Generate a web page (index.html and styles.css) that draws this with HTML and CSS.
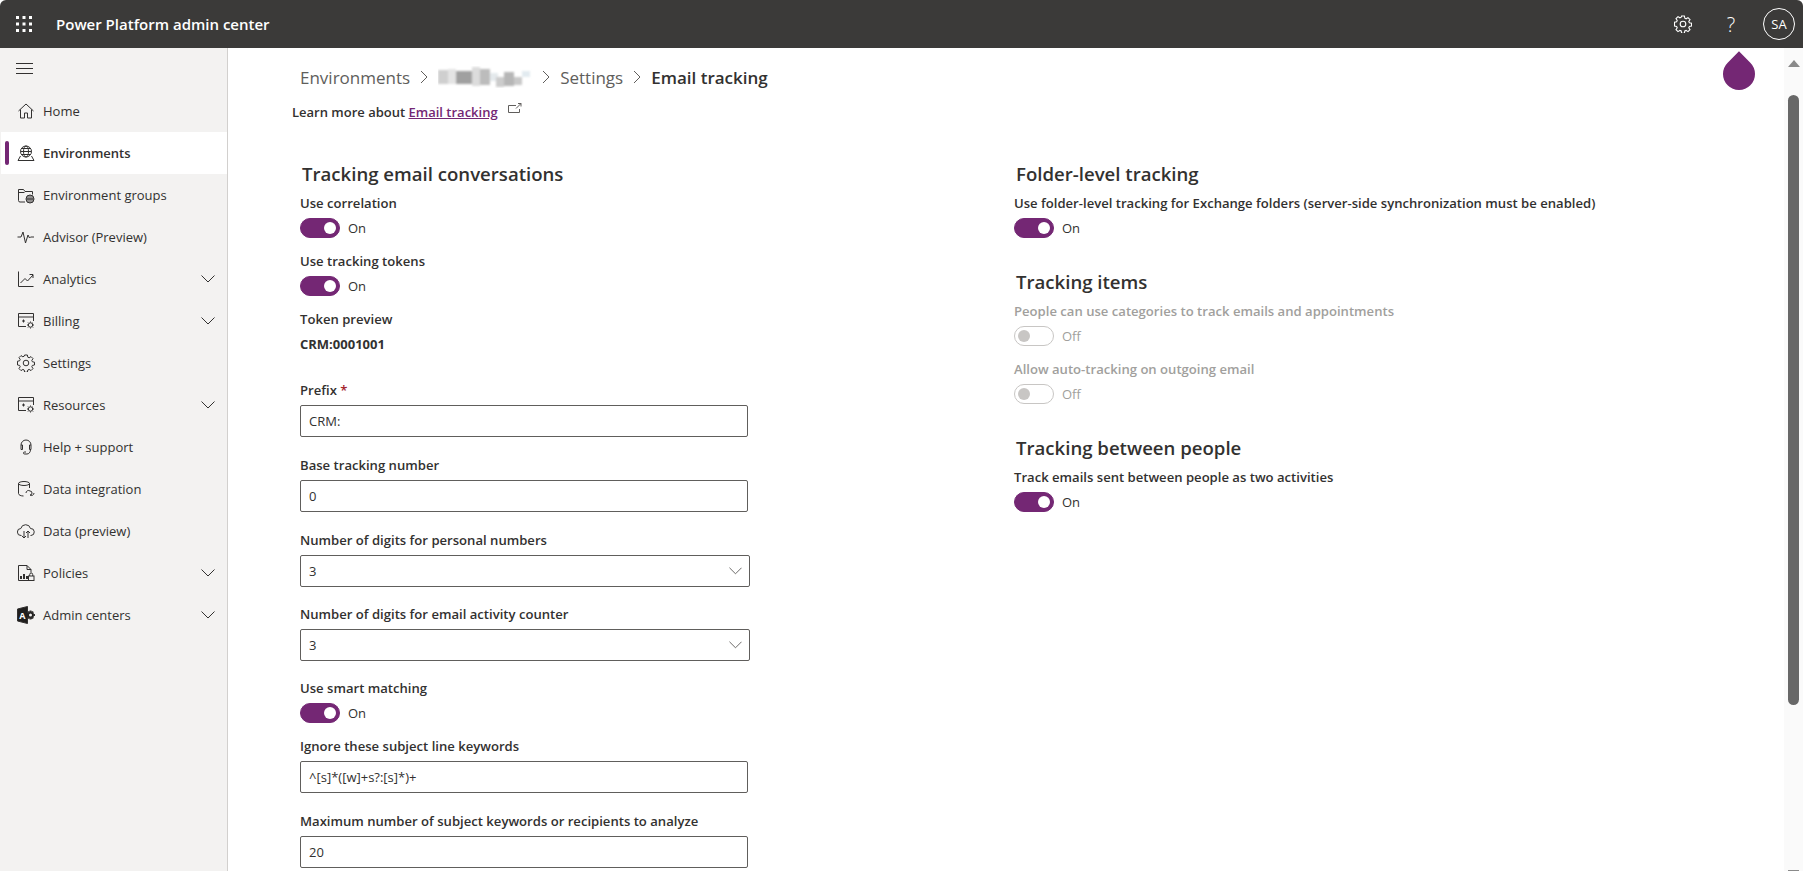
FILE: index.html
```html
<!DOCTYPE html>
<html lang="en">
<head>
    <meta charset="UTF-8">
    <title>Email tracking</title>
    <link rel="stylesheet" href="styles.css">
</head>
<body>
<header class="topbar">
    <svg class="waffle" width="16" height="16" viewBox="0 0 16 16" fill="#fff">
        <rect x="0" y="0" width="3" height="3"/><rect x="6.5" y="0" width="3" height="3"/><rect x="13" y="0" width="3" height="3"/>
        <rect x="0" y="6.5" width="3" height="3"/><rect x="6.5" y="6.5" width="3" height="3"/><rect x="13" y="6.5" width="3" height="3"/>
        <rect x="0" y="13" width="3" height="3"/><rect x="6.5" y="13" width="3" height="3"/><rect x="13" y="13" width="3" height="3"/>
    </svg>
    <div class="app-name">Power Platform admin center</div>
    <div class="top-actions">
        <svg width="18" height="18" viewBox="0 0 18 18" fill="none" stroke="#fff" stroke-width="1.1">
            <path d="M7.600 1h2.800l.4 2.200 1.300.6 1.900-1.200 2 2-1.200 1.900.6 1.300 2.100.4v2.800l-2.100.4-.6 1.300 1.200 1.900-2 2-1.900-1.200-1.300.6-.4 2.200H7.600l-.4-2.200-1.300-.6-1.900 1.200-2-2 1.200-1.900-.6-1.300-2.100-.4V7.200l2.100-.4.6-1.300-1.200-1.900 2-2 1.900 1.200 1.300-.6z"/>
            <circle cx="9" cy="9" r="2.800"/>
        </svg>
        <div class="help">?</div>
        <div class="avatar">SA</div>
    </div>
</header>

<div class="shell">
    <nav class="sidebar">
        <div class="burger"><span></span><span></span><span></span></div>
        <a class="nav-item">
            <svg class="nav-icon" viewBox="0 0 18 18"><path d="M1.500 9 9 2l7.500 7M3.500 7.500V16h4v-5h3v5h4V7.500"/></svg>
            <span>Home</span>
        </a>
        <a class="nav-item active">
            <svg class="nav-icon" viewBox="0 0 18 18"><circle cx="9" cy="7.500" r="5.500"/><ellipse cx="9" cy="7.500" rx="2.500" ry="5.500"/><path d="M3.500 7.500h11M4.500 4.500h9M4.500 10.500h9M3.500 12 1 16.500h16L14.500 12"/></svg>
            <span>Environments</span>
        </a>
        <a class="nav-item">
            <svg class="nav-icon" viewBox="0 0 18 18"><path d="M8 16H3a1.500 1.500 0 0 1-1.500-1.500v-11h5l1.500 2h7.500v3"/><path d="M1.500 6.500h6"/><circle cx="13" cy="13" r="4"/><path d="M9 13h8M13 9v8M11 9.500v7M15 9.500v7"/></svg>
            <span>Environment groups</span>
        </a>
        <a class="nav-item">
            <svg class="nav-icon" viewBox="0 0 18 18"><path d="M.5 9H4l2-5 2.500 11 2.500-8 1.500 3 1-1h3.500"/></svg>
            <span>Advisor (Preview)</span>
        </a>
        <a class="nav-item">
            <svg class="nav-icon" viewBox="0 0 18 18"><path d="M1.500 1.500v15h15M3.500 13 8 8.500l2.500 2.500 5.500-6M12.500 4.500H16V8"/></svg>
            <span>Analytics</span>
            <svg class="nav-chevron" viewBox="0 0 14 8"><path d="M.5.5 7 7 13.500.5"/></svg>
        </a>
        <a class="nav-item">
            <svg class="nav-icon" viewBox="0 0 18 18"><path d="M9 14.500H1.500v-13h15V9M1.500 5h15M5 9h3M6.500 7.500v3"/><circle cx="13.500" cy="13" r="2.200"/><path d="M13.500 9.500v1M13.500 15.500v1M10 13h1M16 13h1M11 10.500l.7.7M15.300 14.800l.7.7M16 10.500l-.7.7M11.700 14.800l-.7.7"/></svg>
            <span>Billing</span>
            <svg class="nav-chevron" viewBox="0 0 14 8"><path d="M.5.5 7 7 13.500.5"/></svg>
        </a>
        <a class="nav-item">
            <svg class="nav-icon" viewBox="0 0 18 18"><circle cx="9" cy="9" r="2.800"/><path d="M7.600 1h2.800l.4 2.200 1.300.6 1.900-1.200 2 2-1.200 1.900.6 1.300 2.100.4v2.800l-2.100.4-.6 1.300 1.200 1.900-2 2-1.900-1.200-1.300.6-.4 2.200H7.600l-.4-2.200-1.300-.6-1.900 1.200-2-2 1.200-1.900-.6-1.300-2.100-.4V7.200l2.100-.4.6-1.300-1.200-1.900 2-2 1.900 1.200 1.300-.6z"/></svg>
            <span>Settings</span>
        </a>
        <a class="nav-item">
            <svg class="nav-icon" viewBox="0 0 18 18"><path d="M9 14.500H1.500v-13h15V9M1.500 5h15M5 9h3M6.500 7.500v3"/><circle cx="13.500" cy="13" r="2.200"/><path d="M13.500 9.500v1M13.500 15.500v1M10 13h1M16 13h1M11 10.500l.7.7M15.300 14.800l.7.7M16 10.500l-.7.7M11.700 14.800l-.7.7"/></svg>
            <span>Resources</span>
            <svg class="nav-chevron" viewBox="0 0 14 8"><path d="M.5.5 7 7 13.500.5"/></svg>
        </a>
        <a class="nav-item">
            <svg class="nav-icon" viewBox="0 0 18 18"><path d="M4 7a5 5 0 0 1 10 0M4 7v4.500h1.500V7zM14 7v4.500h-1.500V7zM13.500 11.500c0 3-1.800 4.500-3.500 4.500H7.500a1 1 0 0 1 0-2H9"/></svg>
            <span>Help + support</span>
        </a>
        <a class="nav-item">
            <svg class="nav-icon" viewBox="0 0 18 18"><ellipse cx="7" cy="3.500" rx="5.500" ry="2"/><path d="M1.500 3.500v10c0 1.500 2.500 2.500 5 2.500M12.500 3.500V8"/><path d="M9 13a2.500 2.500 0 0 1 4-2M17 13a2.500 2.500 0 0 1-4 2M13 11a2 2 0 0 1 0 4"/></svg>
            <span>Data integration</span>
        </a>
        <a class="nav-item">
            <svg class="nav-icon" viewBox="0 0 18 18"><path d="M4.500 13.500H4A3.500 3.500 0 0 1 3.800 6.500a5 5 0 0 1 9.700 0A3.500 3.500 0 0 1 14 13.500h-.5"/><path d="M7 9v7M5 14l2 2 2-2M11 16V9M9 11l2-2 2 2"/></svg>
            <span>Data (preview)</span>
        </a>
        <a class="nav-item">
            <svg class="nav-icon" viewBox="0 0 18 18"><path d="M11 16.500H1.500v-15H10l4 4v3M10 1.500v4h4"/><path class="heavy" d="M4 15v-3M7 15v-5M10 15v-3"/><rect x="11.500" y="12" width="5.500" height="4.500"/><path d="M12.700 12v-1.500a1.500 1.500 0 0 1 3 0V12"/></svg>
            <span>Policies</span>
            <svg class="nav-chevron" viewBox="0 0 14 8"><path d="M.5.5 7 7 13.500.5"/></svg>
        </a>
        <a class="nav-item">
            <svg class="nav-icon" viewBox="0 0 18 18"><path class="solid" d="M.5 3 10.500.5v17L.5 15z"/><text class="icon-letter" x="5.400" y="12.500">A</text><circle class="gear" cx="13.500" cy="9" r="2.500"/><path class="heavy" d="M13.500 4.500v2M13.500 11.500v2M16 9h2M11 5.500l1 1.500M16 5.500l-1 1.500M11 12.500l1-1.500M16 12.500l-1-1.500"/></svg>
            <span>Admin centers</span>
            <svg class="nav-chevron" viewBox="0 0 14 8"><path d="M.5.5 7 7 13.500.5"/></svg>
        </a>
    </nav>

    <main class="content">
        <div class="breadcrumb">
            <span>Environments</span>
            <svg class="crumb-sep" viewBox="0 0 8 14"><path d="M1 1l6 6-6 6"/></svg>
            <svg class="mosaic" width="94" height="22" viewBox="0 0 94 22">
                <g filter="url(#soft)">
                    <rect x="0" y="4" width="10" height="14" fill="#cfcfcf"/>
                    <rect x="10" y="3" width="8" height="15" fill="#e4e4e4"/>
                    <rect x="18" y="5" width="16" height="13" fill="#a0a0a0"/>
                    <rect x="34" y="1" width="8" height="19" fill="#dcdcdc"/>
                    <rect x="42" y="3" width="10" height="16" fill="#bcbcbc"/>
                    <rect x="52" y="7" width="8" height="8" fill="#e4e9ec"/>
                    <rect x="58" y="11" width="8" height="10" fill="#cccccc"/>
                    <rect x="66" y="6" width="10" height="14" fill="#b6b6b6"/>
                    <rect x="76" y="11" width="8" height="8" fill="#c8c8c8"/>
                    <rect x="84" y="5" width="8" height="6" fill="#e2ebf0"/>
                </g>
                <filter id="soft"><feGaussianBlur stdDeviation="1"/></filter>
            </svg>
            <svg class="crumb-sep" viewBox="0 0 8 14"><path d="M1 1l6 6-6 6"/></svg>
            <span>Settings</span>
            <svg class="crumb-sep" viewBox="0 0 8 14"><path d="M1 1l6 6-6 6"/></svg>
            <span class="crumb-current">Email tracking</span>
        </div>

        <div class="learn-more">
            Learn more about <a class="link">Email tracking</a>
            <svg class="ext-icon" width="14" height="10" viewBox="0 0 14 10"><path d="M8 2.500H.5v7h11V6M8 5.500 13 .5M10 .5h3v3"/></svg>
        </div>

        <div class="columns">
            <section>
                <h2>Tracking email conversations</h2>
                <div class="label">Use correlation</div>
                <div class="toggle-row"><span class="toggle on"></span>On</div>
                <div class="label gap-13">Use tracking tokens</div>
                <div class="toggle-row"><span class="toggle on"></span>On</div>
                <div class="label gap-13">Token preview</div>
                <div class="token">CRM:0001001</div>

                <div class="label gap-26">Prefix <span class="req">*</span></div>
                <div class="input">CRM:</div>
                <div class="label gap-18">Base tracking number</div>
                <div class="input">0</div>
                <div class="label gap-18">Number of digits for personal numbers</div>
                <div class="input select">3<svg viewBox="0 0 14 8"><path d="M.5.5 7 7 13.500.5"/></svg></div>
                <div class="label gap-17">Number of digits for email activity counter</div>
                <div class="input select">3<svg viewBox="0 0 14 8"><path d="M.5.5 7 7 13.500.5"/></svg></div>
                <div class="label gap-17">Use smart matching</div>
                <div class="toggle-row"><span class="toggle on"></span>On</div>
                <div class="label gap-13">Ignore these subject line keywords</div>
                <div class="input">^[s]*([w]+s?:[s]*)+</div>
                <div class="label gap-18">Maximum number of subject keywords or recipients to analyze</div>
                <div class="input">20</div>
            </section>

            <section class="right-col">
                <h2>Folder-level tracking</h2>
                <div class="label">Use folder-level tracking for Exchange folders (server-side synchronization must be enabled)</div>
                <div class="toggle-row"><span class="toggle on"></span>On</div>

                <h2 class="gap-30">Tracking items</h2>
                <div class="label disabled">People can use categories to track emails and appointments</div>
                <div class="toggle-row disabled"><span class="toggle"></span>Off</div>
                <div class="label disabled gap-13">Allow auto-tracking on outgoing email</div>
                <div class="toggle-row disabled"><span class="toggle"></span>Off</div>

                <h2 class="gap-30">Tracking between people</h2>
                <div class="label">Track emails sent between people as two activities</div>
                <div class="toggle-row"><span class="toggle on"></span>On</div>
            </section>
        </div>

        <div class="drop"></div>
    </main>

    <div class="scrollbar">
        <div class="scroll-up"></div>
        <div class="scroll-thumb"></div>
        <div class="scroll-down"></div>
    </div>
</div>
</body>
</html>
```
FILE: styles.css
```css
* {
    box-sizing: border-box;
}

html, body {
    height: 100%;
}

body {
    margin: 0;
    display: flex;
    flex-direction: column;
    overflow: hidden;
    background: #fff;
    color: #323130;
    font-family: "Open Sans", "Liberation Sans", sans-serif;
    font-size: 13px;
}

/* top bar */
.topbar {
    flex: none;
    height: 48px;
    display: flex;
    align-items: center;
    padding-left: 16px;
    background: #3b3a39;
    color: #fff;
    border-radius: 6px 6px 0 0;
}

.app-name {
    margin-left: 24px;
    font-size: 15px;
    font-weight: 600;
}

.top-actions {
    margin-left: auto;
    display: flex;
    align-items: center;
    padding-right: 8px;
}

.help {
    width: 18px;
    margin-left: 30px;
    font-size: 20px;
    font-weight: 300;
    text-align: center;
}

.avatar {
    width: 32px;
    height: 32px;
    margin-left: 23px;
    border: 1px solid #fff;
    border-radius: 50%;
    font-size: 13px;
    line-height: 30px;
    text-align: center;
}

/* page below the bar */
.shell {
    flex: 1;
    min-height: 0;
    display: flex;
}

.sidebar {
    flex: none;
    width: 228px;
    padding-left: 1px;
    background: #f3f2f1;
    border-right: 1px solid #d2d0ce;
}

.burger {
    height: 42px;
    padding: 15px 0 0 15px;
}

.burger span {
    display: block;
    width: 17px;
    height: 1px;
    margin-bottom: 4px;
    background: #323130;
}

.nav-item {
    position: relative;
    height: 42px;
    display: flex;
    align-items: center;
    padding-left: 16px;
    color: #323130;
}

.nav-item.active {
    background: #fff;
    font-weight: 600;
}

.nav-item.active::before {
    content: "";
    position: absolute;
    left: 4px;
    top: 9px;
    width: 4px;
    height: 24px;
    border-radius: 2px;
    background: #742774;
}

.nav-icon {
    flex: none;
    width: 18px;
    height: 18px;
    margin-right: 8px;
    fill: none;
    stroke: #323130;
    stroke-width: 1;
}

.nav-icon .heavy {
    stroke-width: 2;
}

.nav-icon .solid {
    fill: #201f1e;
}

.nav-icon .gear {
    stroke: #201f1e;
    stroke-width: 2;
}

.icon-letter {
    fill: #fff;
    stroke: none;
    font-size: 9px;
    font-weight: 700;
    text-anchor: middle;
}

.nav-chevron {
    width: 14px;
    height: 8px;
    margin-left: auto;
    margin-right: 12px;
    fill: none;
    stroke: #323130;
}

/* main area */
.content {
    position: relative;
    flex: 1;
    min-width: 0;
    overflow: hidden;
    padding: 17px 0 0 72px;
}

.breadcrumb {
    height: 24px;
    display: flex;
    align-items: center;
    font-size: 17px;
    color: #605e5c;
}

.crumb-sep {
    width: 8px;
    height: 14px;
    margin: 0 10px;
    fill: none;
    stroke: #605e5c;
}

.crumb-current {
    color: #323130;
    font-weight: 600;
}

.learn-more {
    height: 20px;
    margin: 13px 0 0 -8px;
    font-weight: 600;
    line-height: 20px;
}

.link {
    color: #742774;
    text-decoration: underline;
}

.ext-icon {
    margin: 0 0 4px 7px;
    fill: none;
    stroke: #605e5c;
}

.columns {
    margin-top: 38px;
    display: grid;
    grid-template-columns: 714px 1fr;
}

h2 {
    height: 28px;
    margin: 0 0 5px 2px;
    font-size: 18.600px;
    font-weight: 600;
    line-height: 28px;
}

.label {
    height: 20px;
    margin-bottom: 5px;
    font-size: 13.100px;
    font-weight: 600;
    line-height: 20px;
}

.label.disabled {
    color: #a19f9d;
}

.req {
    color: #a4262c;
}

.gap-13 { margin-top: 13px; }
.gap-17 { margin-top: 17px; }
.gap-18 { margin-top: 18px; }
.gap-26 { margin-top: 26px; }
.gap-30 { margin-top: 30px; }

.toggle-row {
    height: 20px;
    display: flex;
    align-items: center;
    color: #323130;
}

.toggle-row.disabled {
    color: #a19f9d;
}

.toggle {
    position: relative;
    width: 40px;
    height: 20px;
    margin-right: 8px;
    border: 1px solid #c8c6c4;
    border-radius: 10px;
    background: #fff;
}

.toggle::after {
    content: "";
    position: absolute;
    left: 3px;
    top: 3px;
    width: 12px;
    height: 12px;
    border-radius: 50%;
    background: #c8c6c4;
}

.toggle.on {
    border-color: #742774;
    background: #742774;
}

.toggle.on::after {
    left: 23px;
    background: #fff;
}

.token {
    height: 20px;
    font-weight: 700;
    line-height: 20px;
}

.input {
    width: 448px;
    height: 32px;
    padding-left: 8px;
    border: 1px solid #605e5c;
    border-radius: 2px;
    background: #fff;
    color: #323130;
    line-height: 30px;
}

.input.select {
    width: 450px;
    display: flex;
    align-items: center;
    justify-content: space-between;
    padding-right: 7px;
}

.input.select svg {
    width: 13px;
    height: 8px;
    fill: none;
    stroke: #605e5c;
}

/* over the page content */
.drop {
    position: absolute;
    right: 29px;
    top: 10px;
    width: 32px;
    height: 32px;
    background: #742774;
    border-radius: 50% 0 50% 50%;
    transform: rotate(-45deg);
}

.scrollbar {
    flex: none;
    width: 19px;
    display: flex;
    flex-direction: column;
    padding: 12px 4px 0;
    background: #fafafa;
}

.scroll-up {
    width: 0;
    margin: 0 auto;
    border: 6px solid transparent;
    border-top: 0;
    border-bottom: 7px solid #8a8a8a;
}

.scroll-thumb {
    width: 11px;
    height: 610px;
    margin-top: 28px;
    border-radius: 6px;
    background: #686868;
}

.scroll-down {
    height: 1px;
    margin-top: auto;
    background: #8a8a8a;
}
```
